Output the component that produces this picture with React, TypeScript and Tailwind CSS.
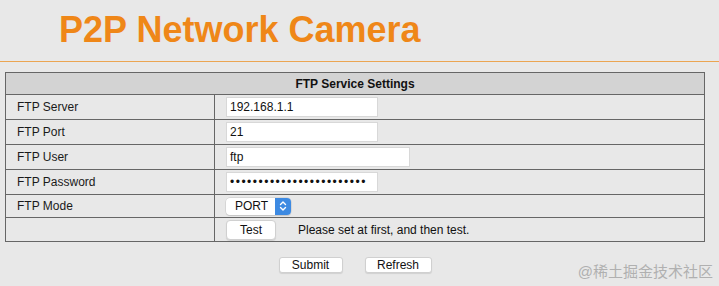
import React from "react";

const font = { fontFamily: '"Liberation Sans", Arial, sans-serif' };

function Row({ label, children, h = "h-[25px]", last = false }: { label: string; children?: React.ReactNode; h?: string; last?: boolean }) {
  return (
    <div className={`flex ${h} ${last ? "" : "border-b border-[#666]"}`}>
      <div className="w-[209px] border-r border-[#666] flex items-center pl-[11px] text-[12px] text-[#1a1a1a]">{label}</div>
      <div className="flex-1 flex items-center pl-[11px]">{children}</div>
    </div>
  );
}

function Field({ value, w }: { value: string; w: string }) {
  return (
    <div className={`${w} h-[20px] bg-white border border-[#d8d8d8] flex items-center pl-[3px] text-[12px] text-[#111]`}>{value}</div>
  );
}

export default function App() {
  return (
    <div className="relative w-[719px] h-[286px] bg-[#e8e8e8] overflow-hidden" style={font}>
      <div className="h-[61px] pl-[59px] pt-[12px]">
        <div className="text-[36px] leading-[36px] font-bold text-[#ef8718]">P2P Network Camera</div>
      </div>
      <div className="h-px bg-[#eba552]" />
      <div className="mt-[10px] ml-[5px] w-[700px] border border-[#666]">
        <div className="h-[22px] bg-[#d3d3d3] border-b border-[#666] flex items-center justify-center text-[12px] font-bold text-[#111]">
          FTP Service Settings
        </div>
        <Row label="FTP Server"><Field value="192.168.1.1" w="w-[152px]" /></Row>
        <Row label="FTP Port"><Field value="21" w="w-[152px]" /></Row>
        <Row label="FTP User"><Field value="ftp" w="w-[184px]" /></Row>
        <Row label="FTP Password">
          <div className="w-[152px] h-[20px] bg-white border border-[#d8d8d8] flex items-center pl-[3px] text-[12px] text-[#111] tracking-[1.5px]">
            ••••••••••••••••••••••••
          </div>
        </Row>
        <Row label="FTP Mode" h="h-[23px]">
          <div className="w-[65px] h-[17px] flex rounded-[4px] bg-white shadow-[0_0_0_0.5px_#c8c8c8,0_1px_1px_rgba(0,0,0,0.15)]">
            <div className="flex-1 flex items-center pl-[9px] text-[12px] text-[#111]">PORT</div>
            <div className="w-[16px] h-full bg-[#3d8ae2] rounded-r-[4px] flex items-center justify-center">
              <svg width="8" height="12" viewBox="0 0 8 12" fill="none" stroke="white" strokeWidth="1.4" strokeLinecap="round" strokeLinejoin="round">
                <path d="M1.5 4.5 L4 2 L6.5 4.5" />
                <path d="M1.5 7.5 L4 10 L6.5 7.5" />
              </svg>
            </div>
          </div>
        </Row>
        <Row label="" h="h-[23px]" last>
          <div className="w-[50px] h-[20px] bg-white rounded-[4px] border border-[#d0d0d0] shadow-[0_1px_1px_rgba(0,0,0,0.1)] flex items-center justify-center text-[12px] text-[#111]">Test</div>
          <div className="ml-[22px] text-[12px] text-[#111]">Please set at first, and then test.</div>
        </Row>
      </div>
      <div className="mt-[15px] ml-[5px] w-[700px] flex justify-center gap-[22px]">
        <div className="w-[64px] h-[16px] bg-white rounded-[3px] border border-[#d0d0d0] shadow-[0_1px_1px_rgba(0,0,0,0.1)] flex items-center justify-center text-[12px] text-[#111]">Submit</div>
        <div className="w-[67px] h-[16px] bg-white rounded-[3px] border border-[#d0d0d0] shadow-[0_1px_1px_rgba(0,0,0,0.1)] flex items-center justify-center text-[12px] text-[#111]">Refresh</div>
      </div>
      <div
        className="absolute right-[6px] bottom-[6px] text-[15px] leading-[17px] text-[#b0b0b0]"
        style={{ fontFamily: '"Liberation Sans", "Noto Sans CJK SC", sans-serif' }}
      >
        @稀土掘金技术社区
      </div>
    </div>
  );
}
